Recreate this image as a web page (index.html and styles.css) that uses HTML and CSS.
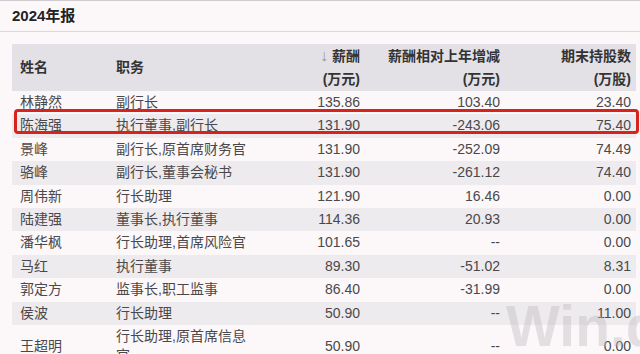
FILE: index.html
```html
<!DOCTYPE html>
<html lang="zh-CN">

<head>
  <meta charset="UTF-8">
  <title>2024年报</title>
  <link rel="stylesheet" href="styles.css">
</head>

<body>
  <div class="page">
    <!-- Report title -->
    <div class="report-title">2024年报</div>

    <div class="table-wrap">
      <table class="pay-table">
        <colgroup>
          <col class="col-name">
          <col class="col-job">
          <col class="col-pay">
          <col class="col-diff">
          <col class="col-shares">
        </colgroup>
        <thead>
          <tr>
            <th>姓名</th>
            <th>职务</th>
            <th class="num"><span class="sort-arrow">↓</span> 薪酬<br>(万元)</th>
            <th class="num">薪酬相对上年增减<br>(万元)</th>
            <th class="num">期末持股数<br>(万股)</th>
          </tr>
        </thead>
        <tbody>
          <tr>
            <td>林静然</td>
            <td>副行长</td>
            <td class="num">135.86</td>
            <td class="num">103.40</td>
            <td class="num">23.40</td>
          </tr>
          <tr>
            <td>陈海强</td>
            <td>执行董事,副行长</td>
            <td class="num">131.90</td>
            <td class="num">-243.06</td>
            <td class="num">75.40</td>
          </tr>
          <tr>
            <td>景峰</td>
            <td>副行长,原首席财务官</td>
            <td class="num">131.90</td>
            <td class="num">-252.09</td>
            <td class="num">74.49</td>
          </tr>
          <tr>
            <td>骆峰</td>
            <td>副行长,董事会秘书</td>
            <td class="num">131.90</td>
            <td class="num">-261.12</td>
            <td class="num">74.40</td>
          </tr>
          <tr>
            <td>周伟新</td>
            <td>行长助理</td>
            <td class="num">121.90</td>
            <td class="num">16.46</td>
            <td class="num">0.00</td>
          </tr>
          <tr>
            <td>陆建强</td>
            <td>董事长,执行董事</td>
            <td class="num">114.36</td>
            <td class="num">20.93</td>
            <td class="num">0.00</td>
          </tr>
          <tr>
            <td>潘华枫</td>
            <td>行长助理,首席风险官</td>
            <td class="num">101.65</td>
            <td class="num">--</td>
            <td class="num">0.00</td>
          </tr>
          <tr>
            <td>马红</td>
            <td>执行董事</td>
            <td class="num">89.30</td>
            <td class="num">-51.02</td>
            <td class="num">8.31</td>
          </tr>
          <tr>
            <td>郭定方</td>
            <td>监事长,职工监事</td>
            <td class="num">86.40</td>
            <td class="num">-31.99</td>
            <td class="num">0.00</td>
          </tr>
          <tr>
            <td>侯波</td>
            <td>行长助理</td>
            <td class="num">50.90</td>
            <td class="num">--</td>
            <td class="num">11.00</td>
          </tr>
          <tr>
            <td>王超明</td>
            <td>行长助理,原首席信息官</td>
            <td class="num">50.90</td>
            <td class="num">--</td>
            <td class="num">0.00</td>
          </tr>
        </tbody>
      </table>

      <!-- Red highlight around the second row -->
      <div class="highlight"></div>
    </div>

    <div class="watermark">Win.d</div>
  </div>
</body>

</html>
```

FILE: styles.css
```css
body {
  margin: 0;
  padding: 0;
  background-color: #fcf8fa;
  font-family: "Liberation Sans", "Noto Sans CJK SC", sans-serif;
  color: #4a484b;
  overflow: hidden;
}

.page {
  position: relative;
  width: 640px;
  height: 354px;
  border-top: 1px solid #cfcccf;
  box-sizing: border-box;
  overflow: hidden;
}

.report-title {
  height: 30px;
  padding-left: 12px;
  line-height: 29px;
  font-size: 15px;
  font-weight: bold;
  color: #222;
  border-bottom: 1px solid #dcd9dc;
}

.table-wrap {
  position: relative;
  margin: 12px 4px 0 12px;
}

.pay-table {
  width: 624px;
  border-collapse: collapse;
  table-layout: fixed;
  font-size: 14px;
}

.col-name {
  width: 96px;
}

.col-job {
  width: 152px;
}

.col-pay {
  width: 108px;
}

.col-diff {
  width: 140px;
}

.col-shares {
  width: 128px;
}

.pay-table th {
  height: 45px;
  padding: 0 8px;
  background-color: #e4e1e6;
  color: #333;
  font-weight: bold;
  text-align: left;
  line-height: 23px;
  vertical-align: middle;
}

.pay-table td {
  height: 19.4px;
  padding: 2px 8px;
  line-height: 19.4px;
  vertical-align: middle;
}

.pay-table tbody tr:nth-child(even) td {
  background-color: #eeebee;
}

.pay-table th:last-child,
.pay-table td:last-child {
  padding-right: 5px;
}

.pay-table .num {
  text-align: right;
}

.sort-arrow {
  color: #9a979b;
  font-size: 16px;
  font-weight: normal;
}

.highlight {
  position: absolute;
  left: 2px;
  top: 65px;
  width: 619px;
  height: 19px;
  border: 3px solid #d8231c;
  border-radius: 4px;
}

.watermark {
  position: absolute;
  left: 506px;
  top: 296px;
  font-size: 57px;
  font-weight: bold;
  line-height: 58px;
  color: rgba(190, 186, 190, 0.42);
  white-space: nowrap;
}
```
